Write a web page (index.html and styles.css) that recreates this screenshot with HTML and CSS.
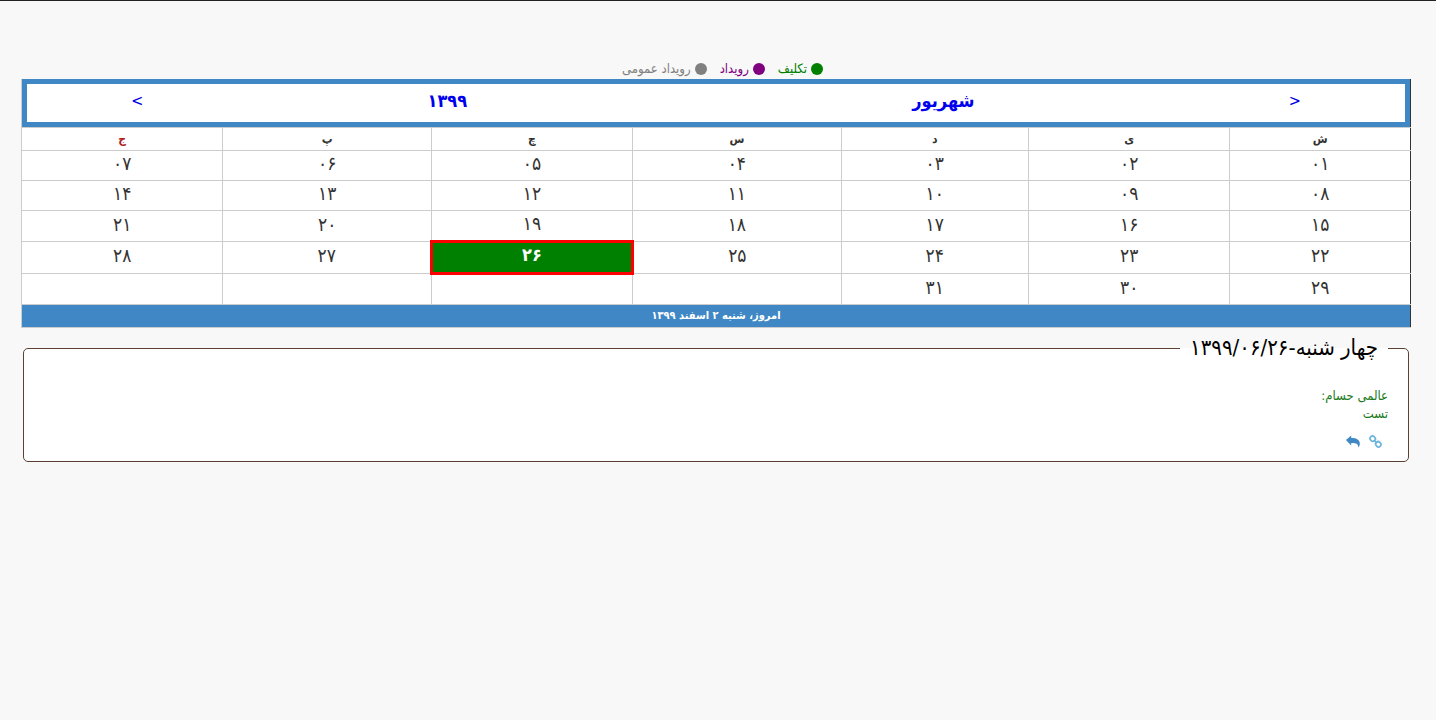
FILE: index.html
```html
<!DOCTYPE html>
<html lang="fa" dir="rtl">
  <head>
    <meta charset="utf-8" />
    <meta name="viewport" content="width=device-width, initial-scale=1" />
    <title>تقویم</title>
    <link rel="stylesheet" href="styles.css" />
  </head>

  <body>
    <main class="page">
      <ul class="guide">
        <li class="guide-item task">تکلیف</li>
        <li class="guide-item event">رویداد</li>
        <li class="guide-item public">رویداد عمومی</li>
      </ul>

      <table class="calendar">
        <colgroup>
          <col class="col-1" />
          <col class="col-2" />
          <col class="col-3" />
          <col class="col-4" />
          <col class="col-5" />
          <col class="col-6" />
          <col class="col-7" />
        </colgroup>
        <thead>
          <tr>
            <td class="title-cell" colspan="7">
              <div class="title">
                <button class="nav" type="button">&lt;</button>
                <a class="month" href="#">شهریور</a>
                <a class="year" href="#">۱۳۹۹</a>
                <button class="nav" type="button">&gt;</button>
              </div>
            </td>
          </tr>
          <tr class="weekdays">
            <th>ش</th>
            <th>ی</th>
            <th>د</th>
            <th>س</th>
            <th>چ</th>
            <th>پ</th>
            <th class="friday">ج</th>
          </tr>
        </thead>
        <tbody>
          <tr class="week">
            <td>۰۱</td>
            <td>۰۲</td>
            <td>۰۳</td>
            <td>۰۴</td>
            <td>۰۵</td>
            <td>۰۶</td>
            <td>۰۷</td>
          </tr>
          <tr class="week">
            <td>۰۸</td>
            <td>۰۹</td>
            <td>۱۰</td>
            <td>۱۱</td>
            <td>۱۲</td>
            <td>۱۳</td>
            <td>۱۴</td>
          </tr>
          <tr class="week">
            <td>۱۵</td>
            <td>۱۶</td>
            <td>۱۷</td>
            <td>۱۸</td>
            <td>۱۹</td>
            <td>۲۰</td>
            <td>۲۱</td>
          </tr>
          <tr class="week">
            <td>۲۲</td>
            <td>۲۳</td>
            <td>۲۴</td>
            <td>۲۵</td>
            <td class="selected">۲۶</td>
            <td>۲۷</td>
            <td>۲۸</td>
          </tr>
          <tr class="week">
            <td>۲۹</td>
            <td>۳۰</td>
            <td>۳۱</td>
            <td></td>
            <td></td>
            <td></td>
            <td></td>
          </tr>
        </tbody>
        <tfoot>
          <tr>
            <td class="today" colspan="7">امروز، شنبه ۲ اسفند ۱۳۹۹</td>
          </tr>
        </tfoot>
      </table>

      <fieldset class="day">
        <legend>چهار شنبه-۱۳۹۹/۰۶/۲۶</legend>
        <p class="note">عالمی حسام:<br />تست</p>
        <div class="actions">
          <a href="#" class="link" aria-label="پیوند">
            <svg width="13" height="13" viewBox="0 0 13 13" fill="none" stroke="currentColor" stroke-width="1.7">
              <rect x="1" y="1.3" width="5.4" height="4.8" rx="2.3" transform="rotate(45 3.7 3.7)" />
              <rect x="6.6" y="6.9" width="5.4" height="4.8" rx="2.3" transform="rotate(45 9.3 9.3)" />
              <path d="M4.9 5l3.2 3.2" />
            </svg>
          </a>
          <a href="#" class="reply" aria-label="پاسخ">
            <svg width="14" height="13" viewBox="0 0 14 13" fill="currentColor">
              <path d="M0 5L5.2.4v2.5c5.6 0 8.6 1.9 8.6 5.7 0 1.7-.5 3-1.5 4 .2-3.4-1.7-4.6-7.1-4.5v2.4z" />
            </svg>
          </a>
        </div>
      </fieldset>
    </main>
  </body>
</html>
```
FILE: styles.css
```css
* {
  box-sizing: border-box;
}

body {
  font-family: "DejaVu Sans Condensed", "DejaVu Sans", sans-serif;
  font-size: 13px;
  line-height: 18px;
  color: #333;
  background-color: #f8f8f8;
  border-top: 1px solid #222;
  margin: 0;
}

.page {
  padding: 59px 25px 20px 21px;
}

a {
  text-decoration: none;
}

.guide {
  display: flex;
  justify-content: center;
  list-style: none;
  margin: 0;
  padding: 0 0 1px;
}

.guide-item {
  display: flex;
  align-items: center;
  gap: 4px;
  margin-left: 13px;
}

.guide-item::before {
  content: "";
  width: 12px;
  height: 12px;
  border-radius: 50%;
  background-color: currentColor;
}

.task {
  color: green;
}

.event {
  color: purple;
}

.public {
  color: gray;
}

.calendar {
  width: 100%;
  table-layout: fixed;
  border-collapse: collapse;
  background-color: #fff;
  text-align: center;
  border-right: 1px solid #333;
}

.col-1 {
  width: 13%;
}

.col-2,
.col-5,
.col-7 {
  width: 14.5%;
}

.col-3 {
  width: 13.5%;
}

.col-4,
.col-6 {
  width: 15%;
}

.calendar th,
.calendar td {
  padding: 0;
  border-left: 1px solid #ccc;
  border-bottom: 1px solid #ccc;
}

.title {
  display: grid;
  grid-template-columns: 16fr 35fr 4fr 29fr 16fr;
  align-items: center;
  height: 48px;
  border: 5px solid #3f88c5;
  font-size: 18px;
  padding-bottom: 5px;
}

.title .nav {
  font-family: inherit;
  font-size: 16px;
  color: #0000e0;
  background: none;
  border: none;
  padding: 0;
  cursor: pointer;
}

.month,
.year {
  color: #0000ee;
  font-weight: bold;
}

.year {
  grid-column: 4;
}

.weekdays th {
  height: 23px;
  font-size: 12px;
}

.weekdays .friday {
  color: #b22222;
}

.week td {
  height: 30px;
  font-size: 19px;
  line-height: 24px;
  padding-bottom: 5px;
}

.week:last-child td {
  height: 31px;
}

.week .selected {
  color: #fff;
  font-size: 18px;
  font-weight: bold;
  background-color: green;
  border: 3px solid red;
}

.calendar .today {
  height: 23px;
  color: #fff;
  font-size: 11px;
  font-weight: bold;
  background-color: #3f88c5;
}

.day {
  min-width: 0;
  margin: 5px 2px 0;
  padding: 24px 20px 13px;
  background-color: #fff;
  border: 1px solid #5c4033;
  border-radius: 5px;
}

.day legend {
  color: #000;
  font-size: 22px;
  line-height: 30px;
  padding: 0 10px;
}

.note {
  margin: 0;
  color: #1b7a1b;
}

.actions {
  display: flex;
  gap: 9px;
  padding: 12px 6px 0;
}

.actions svg {
  display: block;
}

.link {
  color: #6cb4dc;
}

.reply {
  color: #3f88c5;
}
```
